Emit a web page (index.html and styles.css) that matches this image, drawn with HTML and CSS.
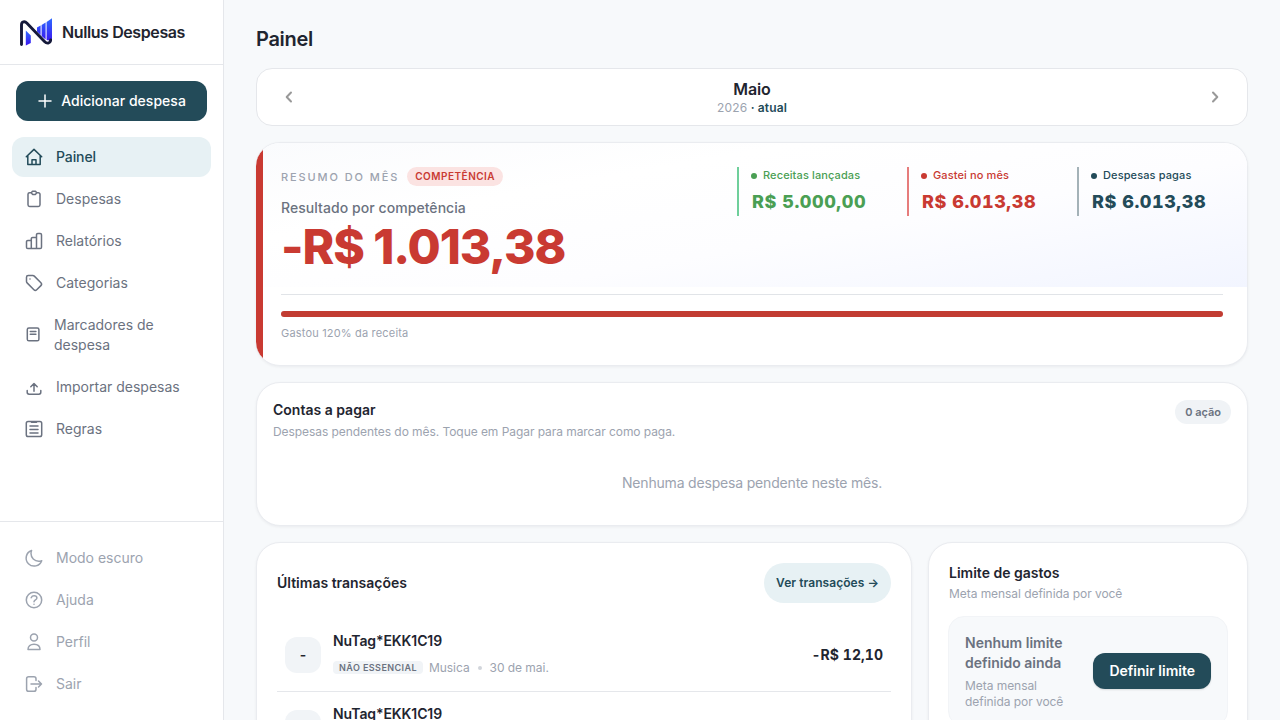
FILE: index.html
```html
<!DOCTYPE html>
<html lang="pt-BR">
<head>
    <meta charset="UTF-8">
    <meta name="viewport" content="width=device-width, initial-scale=1.0">
    <title>Nullus Despesas</title>
    <link rel="stylesheet" href="styles.css">
</head>
<body>
    <div class="app">
        <aside class="sidebar">
            <div class="brand">
                <svg class="brand-logo" viewBox="0 0 32 28">
                    <defs>
                        <linearGradient id="logoBlue" x1="0" y1="0" x2="0" y2="1">
                            <stop offset="0" stop-color="#2f6bff"/>
                            <stop offset="1" stop-color="#3a16f0"/>
                        </linearGradient>
                    </defs>
                    <path d="M5.800 12.500L10.800 17.500v7.600L5.800 27.500z" fill="url(#logoBlue)"/>
                    <path d="M17 9.500l3.600-2v9.500L17 13.500zM21.600 6.900l4-2.300v17l-4-3.700zM26.600 4L32 .2V23l-5.400-1z" fill="url(#logoBlue)"/>
                    <path d="M1.500 26.500V7C1.500 3.400 4.800 3 7 5.200L24.500 23.500c2.300 2.500 5.800 2.300 6.200-1.500" fill="none" stroke="#15193a" stroke-width="2.900" stroke-linecap="round"/>
                </svg>
                <span class="brand-name">Nullus Despesas</span>
            </div>

            <button class="btn-add">
                <svg class="plus" viewBox="0 0 14 14"><path d="M7 1v12M1 7h12"/></svg>
                <span>Adicionar despesa</span>
            </button>

            <nav class="nav">
                <a class="nav-item active" href="#">
                    <svg class="icon" viewBox="0 0 20 20"><path d="M2.300 9.800L10 2.400l7.700 7.400M3.800 8.800v8.700h12.400V8.800M8 17.300v-4.600h4v4.600"/></svg>
                    <span>Painel</span>
                </a>
                <a class="nav-item" href="#">
                    <svg class="icon" viewBox="0 0 20 20"><path d="M7.300 3.700H5.600A1.600 1.600 0 0 0 4 5.300v10.500a1.600 1.600 0 0 0 1.600 1.600h8.800a1.600 1.600 0 0 0 1.600-1.600V5.300a1.600 1.600 0 0 0-1.600-1.600h-1.700M8.500 2.300h3l1.200 1.400-1.200 1.700h-3L7.300 3.700z"/></svg>
                    <span>Despesas</span>
                </a>
                <a class="nav-item" href="#">
                    <svg class="icon" viewBox="0 0 20 20"><path d="M7.300 17.500H3.800a1.300 1.300 0 0 1-1.300-1.300v-5.400a1.300 1.300 0 0 1 1.300-1.300h3.500M12.500 17.500H7.300V7.800a1.300 1.300 0 0 1 1.300-1.300h3.900M12.500 17.500V3.800a1.300 1.300 0 0 1 1.300-1.300h2.400a1.300 1.300 0 0 1 1.300 1.300v12.400a1.300 1.300 0 0 1-1.300 1.300z"/></svg>
                    <span>Relatórios</span>
                </a>
                <a class="nav-item" href="#">
                    <svg class="icon" viewBox="0 0 20 20"><path d="M8.800 2.500H4.200a1.700 1.700 0 0 0-1.700 1.700v4.200c0 .6.200 1.100.6 1.500l6.800 6.900c.8.800 2 .8 2.800 0l4.200-4.200c.8-.8.8-2 0-2.800L10.300 3.100c-.4-.4-.9-.6-1.500-.6zM6 6h.01"/></svg>
                    <span>Categorias</span>
                </a>
                <a class="nav-item" href="#">
                    <svg class="icon icon-sm" viewBox="0 0 18 18"><rect x="3.300" y="2" width="11.600" height="12.800" rx="1.600"/><path d="M6.300 5.500h5.600M6.300 8.300h5.600"/></svg>
                    <span>Marcadores de despesa</span>
                </a>
                <a class="nav-item" href="#">
                    <svg class="icon" viewBox="0 0 20 20"><path d="M10 14.300V6.800M6.800 9.700L10 6.500l3.200 3.200M3.200 13.500v1.800c0 1.100.8 1.900 1.900 1.900h9.800c1.100 0 1.900-.8 1.900-1.900v-1.800"/></svg>
                    <span>Importar despesas</span>
                </a>
                <a class="nav-item" href="#">
                    <svg class="icon" viewBox="0 0 20 20"><rect x="2.300" y="2.500" width="15.400" height="15" rx="1.800"/><path d="M7.500 3.300h5M6 7.100h8M6 10.500h8M6 14h8"/></svg>
                    <span>Regras</span>
                </a>
            </nav>

            <div class="nav nav-footer">
                <a class="nav-item" href="#">
                    <svg class="icon" viewBox="0 0 20 20"><path d="M17.700 12.700a8 8 0 0 1-3 .6A7.700 7.700 0 0 1 7 5.600c0-1.100.2-2.200.6-3.100a8 8 0 1 0 10.100 10.200z"/></svg>
                    <span>Modo escuro</span>
                </a>
                <a class="nav-item" href="#">
                    <svg class="icon" viewBox="0 0 20 20"><circle cx="10" cy="10" r="7.700"/><path d="M7.200 7.700c.6-1.400 1.700-1.900 2.900-1.900 1.600 0 2.800.9 2.800 2.200 0 2-2.900 1.900-2.900 3.800M10 14.300h.01"/></svg>
                    <span>Ajuda</span>
                </a>
                <a class="nav-item" href="#">
                    <svg class="icon" viewBox="0 0 20 20"><circle cx="10" cy="5.600" r="3.500"/><path d="M4 17.500c0-3.500 2.500-5.300 6-5.300s6 1.800 6 5.300z"/></svg>
                    <span>Perfil</span>
                </a>
                <a class="nav-item" href="#">
                    <svg class="icon" viewBox="0 0 20 20"><path d="M12 6.500V4.800c0-1.200-.9-2.100-2.100-2.100H4.700c-1.200 0-2.100.9-2.100 2.100v10.400c0 1.200.9 2.100 2.100 2.100h5.200c1.200 0 2.100-.9 2.100-2.100v-1.700M7 10h10.500M14.500 7l3 3-3 3"/></svg>
                    <span>Sair</span>
                </a>
            </div>
        </aside>

        <main class="main">
            <h1>Painel</h1>

            <section class="month-card">
                <svg class="chevron" viewBox="0 0 16 16"><path d="M10 3.500L5.700 8l4.300 4.500"/></svg>
                <div class="month">
                    <strong>Maio</strong>
                    <span>2026 <b>· atual</b></span>
                </div>
                <svg class="chevron" viewBox="0 0 16 16"><path d="M6 3.500L10.300 8 6 12.500"/></svg>
            </section>

            <section class="card summary">
                <div class="summary-top">
                    <div class="result">
                        <div class="eyebrow">Resumo do mês <span class="badge">Competência</span></div>
                        <p class="result-label">Resultado por competência</p>
                        <p class="result-value">-R$ 1.013,38</p>
                    </div>
                    <div class="metrics">
                        <div class="metric income">
                            <span class="metric-label">Receitas lançadas</span>
                            <span class="metric-value">R$ 5.000,00</span>
                        </div>
                        <div class="metric spent">
                            <span class="metric-label">Gastei no mês</span>
                            <span class="metric-value">R$ 6.013,38</span>
                        </div>
                        <div class="metric paid">
                            <span class="metric-label">Despesas pagas</span>
                            <span class="metric-value">R$ 6.013,38</span>
                        </div>
                    </div>
                </div>
                <div class="progress-area">
                    <div class="progress"><div class="progress-fill" style="width: 100%"></div></div>
                    <p>Gastou 120% da receita</p>
                </div>
            </section>

            <section class="card bills">
                <div class="bills-header">
                    <div>
                        <h2>Contas a pagar</h2>
                        <p class="subtitle">Despesas pendentes do mês. Toque em Pagar para marcar como paga.</p>
                    </div>
                    <span class="count">0 ação</span>
                </div>
                <p class="empty">Nenhuma despesa pendente neste mês.</p>
            </section>

            <div class="columns">
                <section class="card transactions">
                    <div class="transactions-header">
                        <h2>Últimas transações</h2>
                        <a class="btn-link" href="#">Ver transações →</a>
                    </div>
                    <div class="transaction">
                        <div class="avatar">-</div>
                        <div class="info">
                            <p class="name">NuTag*EKK1C19</p>
                            <p class="meta"><span class="tag">Não essencial</span><span>Musica</span><i></i><span>30 de mai.</span></p>
                        </div>
                        <span class="amount">-R$ 12,10</span>
                    </div>
                    <div class="transaction">
                        <div class="avatar">-</div>
                        <div class="info">
                            <p class="name">NuTag*EKK1C19</p>
                            <p class="meta"><span class="tag">Não essencial</span><span>Musica</span><i></i><span>30 de mai.</span></p>
                        </div>
                        <span class="amount">-R$ 12,10</span>
                    </div>
                </section>

                <section class="card limit">
                    <h2>Limite de gastos</h2>
                    <p class="subtitle">Meta mensal definida por você</p>
                    <div class="limit-box">
                        <div>
                            <p class="limit-title">Nenhum limite definido ainda</p>
                            <p class="limit-text">Meta mensal definida por você</p>
                        </div>
                        <button class="btn-limit">Definir limite</button>
                    </div>
                </section>
            </div>
        </main>
    </div>
</body>
</html>
```
FILE: styles.css
```css
:root {
    --primary: #234b59;
    --primary-soft: #e7f1f4;
    --background: #f7f9fb;
    --border: #e5e7eb;
    --text: #1f2530;
    --text-medium: #6b7280;
    --text-light: #9ca3af;
    --red: #c93a32;
    --green: #4a9f54;
}

* {
    margin: 0;
    padding: 0;
    box-sizing: border-box;
}

body {
    font-family: Inter, "Liberation Sans", sans-serif;
    background: var(--background);
    color: var(--text);
    font-size: 14px;
    line-height: 20px;
    overflow: hidden;
}

a {
    color: inherit;
    text-decoration: none;
}

button {
    font-family: inherit;
    border: none;
    cursor: pointer;
}

svg {
    flex-shrink: 0;
}

svg.icon,
svg.plus,
svg.chevron {
    fill: none;
    stroke: currentColor;
    stroke-linecap: round;
    stroke-linejoin: round;
}

.app {
    display: flex;
    height: 100vh;
    overflow: hidden;
}

/* Sidebar */
.sidebar {
    width: 224px;
    flex-shrink: 0;
    display: flex;
    flex-direction: column;
    background: #fff;
    border-right: 1px solid var(--border);
}

.brand {
    height: 65px;
    display: flex;
    align-items: center;
    gap: 10px;
    padding: 0 20px;
    border-bottom: 1px solid var(--border);
}

.brand-logo {
    width: 32px;
    height: 28px;
}

.brand-name {
    font-size: 16px;
    font-weight: 600;
    letter-spacing: -0.4px;
}

.btn-add {
    display: flex;
    align-items: center;
    justify-content: center;
    gap: 9px;
    height: 40px;
    margin: 16px 16px 0;
    padding: 0 0 1px 1px;
    border-radius: 12px;
    background: var(--primary);
    color: #fff;
    font-size: 14px;
    font-weight: 500;
    letter-spacing: 0.02px;
}

.plus {
    width: 14px;
    height: 14px;
    stroke-width: 1.5;
}

.nav {
    display: flex;
    flex-direction: column;
    gap: 2px;
    padding: 16px 12px;
}

.nav-item {
    display: flex;
    align-items: center;
    gap: 12px;
    padding: 10px 12px;
    border-radius: 12px;
    color: var(--text-medium);
}

.nav-item.active {
    background: var(--primary-soft);
    color: var(--primary);
    font-weight: 500;
    letter-spacing: -0.1px;
}

.icon {
    width: 20px;
    height: 20px;
    stroke-width: 1.5;
}

.icon-sm {
    width: 18px;
    height: 18px;
}

.nav-footer {
    margin-top: auto;
    border-top: 1px solid var(--border);
}

.nav-footer .nav-item {
    color: var(--text-light);
}

/* Content */
.main {
    flex: 1;
    display: flex;
    flex-direction: column;
    gap: 16px;
    padding: 24px 32px 0;
}

.main > * {
    flex-shrink: 0;
}

h1 {
    font-size: 20px;
    line-height: 30px;
    font-weight: 600;
    letter-spacing: -0.3px;
    margin-bottom: -2px;
}

h2 {
    font-size: 14px;
    line-height: 20px;
    font-weight: 600;
}

.card {
    background: #fff;
    border: 1px solid #eaecf0;
    border-radius: 24px;
    box-shadow: 0 1px 3px rgba(15, 23, 42, 0.06);
}

.month-card {
    display: flex;
    align-items: center;
    justify-content: space-between;
    height: 58px;
    padding: 0 24px;
    background: #fff;
    border: 1px solid var(--border);
    border-radius: 16px;
}

.chevron {
    width: 16px;
    height: 16px;
    color: #999;
    stroke-width: 2;
}

.month {
    display: flex;
    flex-direction: column;
    text-align: center;
}

.month strong {
    font-size: 16px;
    line-height: 20px;
    font-weight: 600;
    letter-spacing: -0.1px;
}

.month span {
    font-size: 12px;
    line-height: 17px;
    letter-spacing: 0.12px;
    color: var(--text-light);
}

.month b {
    font-weight: 600;
    color: var(--primary);
}

/* Month summary */
.summary {
    height: 224px;
    border-left: none;
    overflow: hidden;
    background: linear-gradient(var(--red), var(--red)) left / 7px 100% no-repeat #fff;
    padding-left: 7px;
}

.summary-top {
    display: flex;
    justify-content: space-between;
    height: 144px;
    padding: 24px 24px 0 18px;
    background: linear-gradient(170deg, #fafbfd 0%, #fff 30%, #fdfdff 60%, #f2f5ff 100%);
}

.eyebrow {
    display: flex;
    align-items: center;
    gap: 8px;
    height: 19px;
    font-size: 11px;
    letter-spacing: 1.9px;
    font-weight: 500;
    text-transform: uppercase;
    color: var(--text-light);
}

.badge {
    padding: 0 8px;
    border-radius: 10px;
    background: #fbe3e2;
    color: var(--red);
    font-size: 10px;
    line-height: 19px;
    font-weight: 600;
    letter-spacing: 0.5px;
}

.result-label {
    margin-top: 12px;
    font-weight: 500;
    letter-spacing: 0.06px;
    color: var(--text-medium);
}

.result-value {
    margin-top: 5px;
    font-size: 48px;
    line-height: 48px;
    font-weight: 800;
    letter-spacing: -1.1px;
    color: var(--red);
}

.metrics {
    display: grid;
    grid-template-columns: repeat(3, 170px);
    margin-right: -24px;
}

.metric {
    display: flex;
    flex-direction: column;
    height: 49px;
    padding-left: 13px;
    border-left: 2px solid;
}

.metric-label {
    display: flex;
    align-items: center;
    gap: 6px;
    margin-left: -1px;
    font-size: 11px;
    line-height: 17px;
    font-weight: 500;
    letter-spacing: 0.12px;
}

.metric-label::before {
    content: "";
    width: 6px;
    height: 6px;
    border-radius: 50%;
    background: currentColor;
}

.metric-value {
    margin-top: 4px;
    font-size: 18px;
    line-height: 27px;
    font-weight: 800;
    font-variant-numeric: tabular-nums;
    letter-spacing: 0.55px;
}

.income {
    color: var(--green);
    border-color: #6fcf9b;
}

.spent {
    color: var(--red);
    border-color: #e67c7c;
}

.paid {
    color: var(--primary);
    border-color: #a4b2b8;
}

.progress-area {
    margin: 7px 24px 0 18px;
    padding-top: 16px;
    border-top: 1px solid #e1e4e8;
}

.progress {
    height: 6px;
    border-radius: 3px;
    background: #f1f3f5;
}

.progress-fill {
    height: 6px;
    border-radius: 3px;
    background: #c23c32;
}

.progress-area p {
    margin-top: 8px;
    font-size: 11px;
    line-height: 16px;
    letter-spacing: 0.18px;
    color: var(--text-light);
}

/* Bills */
.bills {
    height: 144px;
    padding: 17px 16px;
}

.bills-header {
    display: flex;
    justify-content: space-between;
    align-items: flex-start;
}

.subtitle {
    margin-top: 3px;
    font-size: 12px;
    line-height: 18px;
    letter-spacing: -0.06px;
    color: var(--text-light);
}

.count {
    padding: 0 10px;
    border-radius: 12px;
    background: #f0f3f6;
    color: var(--text-medium);
    font-size: 11px;
    line-height: 24px;
    font-weight: 600;
}

.empty {
    margin-top: 32px;
    text-align: center;
    letter-spacing: -0.18px;
    color: var(--text-light);
}

/* Bottom columns */
.columns {
    display: grid;
    grid-template-columns: 656px 320px;
    gap: 16px;
}

.transactions,
.limit {
    height: 320px;
    padding: 20px;
}

.transactions-header {
    display: flex;
    align-items: center;
    justify-content: space-between;
    margin-bottom: 16px;
}

.btn-link {
    padding: 0 12px;
    border-radius: 20px;
    background: var(--primary-soft);
    color: var(--primary);
    font-size: 12px;
    line-height: 40px;
    font-weight: 600;
    letter-spacing: 0.06px;
}

.transaction {
    display: flex;
    align-items: center;
    gap: 12px;
    height: 73px;
    padding: 0 8px;
    border-bottom: 1px solid var(--border);
}

.avatar {
    width: 36px;
    height: 36px;
    border-radius: 12px;
    background: #f1f4f7;
    text-align: center;
    line-height: 36px;
    font-weight: 600;
}

.info {
    flex: 1;
    margin-bottom: 4px;
}

.name {
    font-weight: 600;
    letter-spacing: -0.1px;
}

.meta {
    display: flex;
    align-items: center;
    gap: 6px;
    margin-top: 9px;
    font-size: 12px;
    line-height: 16px;
    letter-spacing: -0.05px;
    color: var(--text-light);
}

.meta i {
    width: 4px;
    height: 4px;
    margin: 0 2px;
    border-radius: 50%;
    background: #d1d5db;
}

.tag {
    padding: 0 6px;
    border-radius: 4px;
    background: #f1f4f7;
    color: var(--text-medium);
    font-size: 9px;
    line-height: 13px;
    font-weight: 600;
    letter-spacing: 0.43px;
    text-transform: uppercase;
}

.amount {
    font-weight: 700;
    font-variant-numeric: tabular-nums;
    letter-spacing: 0.05px;
}

.limit .subtitle {
    margin-top: 2px;
}

.limit-box {
    display: flex;
    align-items: center;
    justify-content: space-between;
    gap: 12px;
    margin: 13px -1px 0;
    padding: 16px;
    border: 1px solid #f2f4f7;
    border-radius: 16px;
    background: var(--background);
}

.limit-title {
    font-weight: 600;
    color: var(--text-medium);
}

.limit-text {
    margin-top: 5px;
    font-size: 12px;
    line-height: 16px;
    letter-spacing: -0.05px;
    color: var(--text-light);
}

.btn-limit {
    flex-shrink: 0;
    height: 36px;
    margin-bottom: 2px;
    padding: 0 16px;
    border-radius: 12px;
    background: var(--primary);
    color: #fff;
    font-size: 14px;
    font-weight: 600;
    box-shadow: 0 1px 2px rgba(0, 0, 0, 0.12);
}
```
